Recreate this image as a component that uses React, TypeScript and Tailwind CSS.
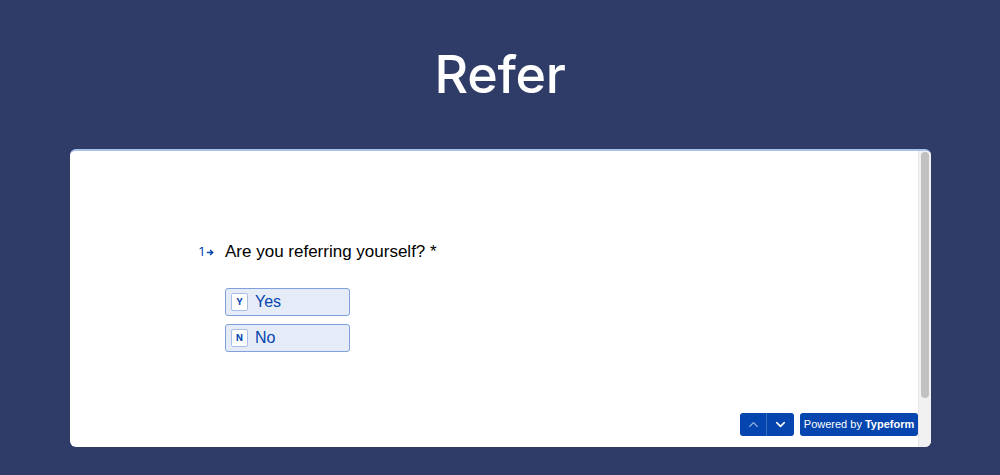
import { ChevronUp, ChevronDown } from 'lucide-react'

const choices = [
  { key: 'Y', label: 'Yes' },
  { key: 'N', label: 'No' },
]

const App = () => {
  return (
    <div className="min-h-[475px] w-[1000px] bg-[#2e3c67] font-['Inter',sans-serif] flex flex-col">
      <div className="h-[149px] flex items-center justify-center pb-[1px]">
        <h1 className="text-white text-[52px] font-medium leading-none tracking-[-0.3px] mt-[2px]">Refer</h1>
      </div>

      <div className="mx-[70px] w-[861px] h-[298px] bg-white rounded-[6px] overflow-hidden flex border-t-2 border-[#a9c2ea]">
        <div className="flex-1 flex flex-col">
          <div className="pl-[129px] pt-[89px]">
            <div className="flex items-center">
              <div className="w-[26px] flex items-center text-[#0445af] text-[12px] leading-none">
                <span>1</span>
                <svg width="9" height="9" viewBox="0 0 10 10" className="ml-[2px]">
                  <path d="M1 5h6M4.5 2.2L7.5 5 4.5 7.8" stroke="#0445af" strokeWidth="1.6" fill="none" />
                </svg>
              </div>
              <p className="text-[17px] text-black leading-[24px] font-['Liberation_Sans',sans-serif]">Are you referring yourself? *</p>
            </div>
            <div className="ml-[26px] mt-[24px] flex flex-col gap-[8px]">
              {choices.map(c => (
                <div
                  key={c.key}
                  className="w-[125px] h-[28px] rounded-[3px] border border-[#7ea1dd] bg-[#e6ecf7] flex items-center pl-[5px]"
                >
                  <span className="w-[17px] h-[18px] bg-white border border-[#a9bfe6] rounded-[2px] flex items-center justify-center text-[9px] font-bold text-[#0445af]">
                    {c.key}
                  </span>
                  <span className="ml-[7px] text-[16px] text-[#0445af] font-['Liberation_Sans',sans-serif]">{c.label}</span>
                </div>
              ))}
            </div>
          </div>
          <div className="mt-auto mb-[11px] flex justify-end gap-[6px]">
            <div className="flex h-[23px] rounded-[3px] overflow-hidden bg-[#0445af]">
              <button className="w-[27px] flex items-center justify-center border-r border-[#3a6cc0]">
                <ChevronUp size={15} className="text-white opacity-60" strokeWidth={2.2} />
              </button>
              <button className="w-[27px] flex items-center justify-center">
                <ChevronDown size={15} className="text-white" strokeWidth={2.5} />
              </button>
            </div>
            <button className="h-[23px] w-[118px] rounded-[3px] bg-[#0445af] text-white text-[11px] flex items-center justify-center whitespace-nowrap font-['Liberation_Sans',sans-serif]">
              Powered by <span className="font-bold ml-[3px]">Typeform</span>
            </button>
          </div>
        </div>
        <div className="w-[13px] bg-[#f1f1f1] border-l border-[#e6e6e6] flex justify-center pt-[1px]">
          <div className="w-[8px] h-[246px] rounded-full bg-[#c1c1c1]" />
        </div>
      </div>
      <div className="flex-1" />
    </div>
  )
}

export default App
